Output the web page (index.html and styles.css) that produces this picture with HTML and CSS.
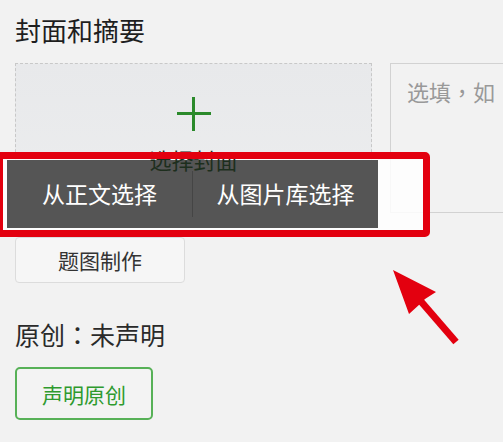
FILE: index.html
```html
<!DOCTYPE html>
<html lang="zh-CN">
<head>
    <meta charset="UTF-8">
    <meta name="viewport" content="width=device-width, initial-scale=1.0">
    <title>封面和摘要</title>
    <link rel="stylesheet" href="styles.css">
</head>
<body>

    <div class="page">
        <h2 class="title">封面和摘要</h2>

        <div class="cover-row">
            <div class="cover-box">
                <span class="plus"></span>
                <span class="cover-label">选择封面</span>
            </div>
            <div class="digest">选填<span class="punct" lang="zh-TW">，</span>如</div>
        </div>

        <button class="make-btn">题图制作</button>

        <p class="original">原创<span class="punct" lang="zh-TW">：</span>未声明</p>
        <button class="claim-btn">声明原创</button>

        <!-- 悬停弹出的选择菜单 -->
        <div class="popover-area">
            <div class="popover">
                <a href="#">从正文选择</a>
                <a href="#">从图片库选择</a>
            </div>
        </div>

        <!-- 标注：红框和箭头 -->
        <div class="highlight"></div>
        <svg class="arrow" width="90" height="90" viewBox="0 0 90 90">
            <line x1="38" y1="38" x2="76" y2="82" stroke="#e3000f" stroke-width="7"/>
            <polygon points="13,10 56,32 45,39 40,44 29,54" fill="#e3000f"/>
        </svg>
    </div>

</body>
</html>
```

FILE: styles.css
```css
body {
    margin: 0;
    background: #f2f2f2;
    font-family: "Noto Sans CJK SC", "Noto Sans", sans-serif;
    overflow: hidden;
}
.page {
    position: relative;
    width: 503px;
    height: 442px;
    padding: 17px 0 0 15px;
    box-sizing: border-box;
}
/* 居中的全角标点 */
.punct {
    font-family: "Noto Sans CJK TC", sans-serif;
}
.title {
    margin: 0 0 20px;
    font-size: 26px;
    line-height: 26px;
    font-weight: normal;
    color: #1e1e1e;
}
/* 封面和摘要 */
.cover-row {
    display: flex;
    gap: 18px;
    width: 560px;
}
.cover-box {
    width: 357px;
    height: 150px;
    box-sizing: border-box;
    border: 1px dashed #c8c8c8;
    background: linear-gradient(#e8e9eb, #ecedee);
    display: flex;
    flex-direction: column;
    align-items: center;
    padding-top: 33px;
}
.plus {
    position: relative;
    width: 34px;
    height: 34px;
}
.plus::before,
.plus::after {
    content: "";
    position: absolute;
    background: #2b8a2b;
}
.plus::before {
    left: 0;
    top: 15px;
    width: 34px;
    height: 3px;
}
.plus::after {
    left: 15px;
    top: 0;
    width: 3px;
    height: 34px;
}
.cover-label {
    position: relative;
    z-index: 2;
    margin-top: 15px;
    font-size: 22px;
    line-height: 26px;
    color: #1d2e1d;
}
.digest {
    flex: 1;
    height: 150px;
    box-sizing: border-box;
    border: 1px solid #d2d2d2;
    padding: 12px 16px;
    font-size: 22px;
    line-height: 30px;
    color: #999;
    white-space: nowrap;
    overflow: hidden;
}
.make-btn {
    display: block;
    margin-top: 24px;
    width: 170px;
    height: 46px;
    border: 1px solid #dcdcdc;
    border-radius: 4px;
    background: #f6f6f6;
    font-family: inherit;
    font-size: 21px;
    color: #333;
}
.original {
    margin: 37px 0 0;
    font-size: 25px;
    line-height: 28px;
    color: #2a2a2a;
}
.claim-btn {
    display: block;
    margin-top: 19px;
    width: 138px;
    height: 53px;
    border: 2px solid #57b157;
    border-radius: 5px;
    background: #f3f3f3;
    font-family: inherit;
    font-size: 21px;
    color: #2e9a2e;
}
/* 弹出菜单 */
.popover-area {
    position: absolute;
    z-index: 1;
    left: 3px;
    top: 159px;
    width: 420px;
    height: 71px;
    background: rgba(255, 255, 255, 0.85);
}
.popover {
    position: relative;
    margin: 1px 0 0 4px;
    width: 371px;
    height: 68px;
    background: #555;
    display: flex;
    align-items: center;
}
.popover::before {
    content: "";
    position: absolute;
    left: 180px;
    top: -13px;
    border: 6px solid transparent;
    border-bottom: 7px solid #555;
}
.popover a {
    flex: 1;
    text-align: center;
    color: #fff;
    text-decoration: none;
    font-size: 23px;
    line-height: 44px;
    padding-bottom: 2px;
}
.popover a + a {
    border-left: 1px solid #454545;
}
/* 标注 */
.highlight {
    position: absolute;
    z-index: 3;
    left: -4px;
    top: 152px;
    width: 434px;
    height: 85px;
    box-sizing: border-box;
    border: 7px solid #e3000f;
    border-radius: 5px;
}
.arrow {
    position: absolute;
    z-index: 3;
    left: 380px;
    top: 260px;
}
```
